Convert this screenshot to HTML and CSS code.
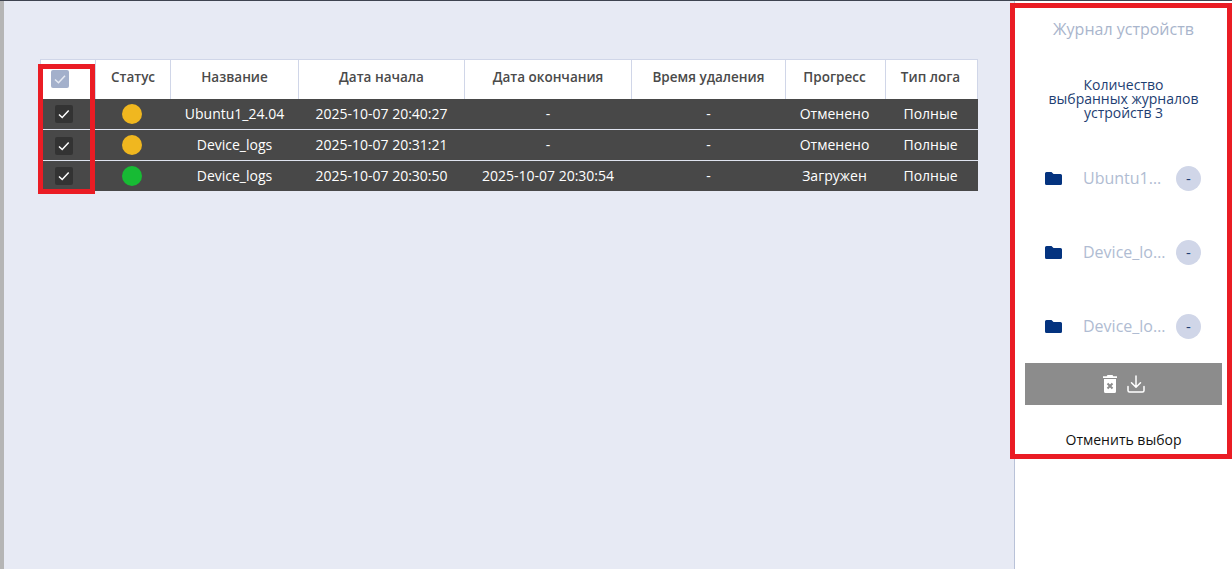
FILE: index.html
```html
<!DOCTYPE html>
<html lang="ru">
<head>
<meta charset="utf-8">
<title>Журнал устройств</title>
<link rel="stylesheet" href="styles.css">
</head>
<body>
<div class="app">
  <div class="strip"></div>
  <main class="main">
    <table class="logs">
      <colgroup>
        <col class="c1"><col class="c2"><col class="c3"><col class="c4"><col class="c5"><col class="c6"><col class="c7"><col class="c8">
      </colgroup>
      <thead>
        <tr>
          <th><span class="check check-head"><svg viewBox="0 0 18 18"><path d="M4 9.500l3.500 3.200 6.500-7"/></svg></span></th>
          <th>Статус</th><th>Название</th><th>Дата начала</th><th>Дата окончания</th><th>Время удаления</th><th>Прогресс</th><th>Тип лога</th>
        </tr>
      </thead>
      <tbody>
        <tr>
          <td><span class="check"><svg viewBox="0 0 18 18"><path d="M4 9.500l3.200 3 6.500-7"/></svg></span></td>
          <td><span class="dot amber"></span></td>
          <td>Ubuntu1_24.04</td><td>2025-10-07 20:40:27</td><td>-</td><td>-</td><td>Отменено</td><td>Полные</td>
        </tr>
        <tr>
          <td><span class="check"><svg viewBox="0 0 18 18"><path d="M4 9.500l3.200 3 6.500-7"/></svg></span></td>
          <td><span class="dot amber"></span></td>
          <td>Device_logs</td><td>2025-10-07 20:31:21</td><td>-</td><td>-</td><td>Отменено</td><td>Полные</td>
        </tr>
        <tr>
          <td><span class="check"><svg viewBox="0 0 18 18"><path d="M4 9.500l3.200 3 6.500-7"/></svg></span></td>
          <td><span class="dot green"></span></td>
          <td>Device_logs</td><td>2025-10-07 20:30:50</td><td>2025-10-07 20:30:54</td><td>-</td><td>Загружен</td><td>Полные</td>
        </tr>
      </tbody>
    </table>
    <div class="mark mark-table"></div>
  </main>
  <aside class="panel">
    <h2 class="panel-title">Журнал устройств</h2>
    <p class="panel-count">Количество<br>выбранных журналов<br>устройств 3</p>
    <ul class="files">
      <li class="file">
        <svg class="folder" viewBox="0 0 17 13"><path d="M1.500 0h5l2 2h7A1.500 1.500 0 0 1 17 3.500v8A1.500 1.500 0 0 1 15.500 13h-14A1.500 1.500 0 0 1 0 11.500v-10A1.500 1.500 0 0 1 1.500 0z"/></svg>
        <span class="file-name">Ubuntu1_24.04</span>
        <span class="minus">-</span>
      </li>
      <li class="file">
        <svg class="folder" viewBox="0 0 17 13"><path d="M1.500 0h5l2 2h7A1.500 1.500 0 0 1 17 3.500v8A1.500 1.500 0 0 1 15.500 13h-14A1.500 1.500 0 0 1 0 11.500v-10A1.500 1.500 0 0 1 1.500 0z"/></svg>
        <span class="file-name">Device_logs</span>
        <span class="minus">-</span>
      </li>
      <li class="file">
        <svg class="folder" viewBox="0 0 17 13"><path d="M1.500 0h5l2 2h7A1.500 1.500 0 0 1 17 3.500v8A1.500 1.500 0 0 1 15.500 13h-14A1.500 1.500 0 0 1 0 11.500v-10A1.500 1.500 0 0 1 1.500 0z"/></svg>
        <span class="file-name">Device_logs</span>
        <span class="minus">-</span>
      </li>
    </ul>
    <div class="actions">
      <svg class="icon-trash" viewBox="0 0 14 18"><path class="solid" d="M4.500 0h5l.8 1.200H14V3H0V1.200h3.700zM1 4h12v12.500a1.500 1.500 0 0 1-1.500 1.500h-9A1.500 1.500 0 0 1 1 16.500z"/><path class="trash-x" d="M4.500 8.500l5 5M9.500 8.500l-5 5"/></svg>
      <svg class="icon-down" viewBox="0 0 18 18"><path d="M9 1v11M4.500 7.800 9 12.300l4.500-4.500M1 11.500v4a1.500 1.500 0 0 0 1.500 1.500h13a1.500 1.500 0 0 0 1.500-1.500v-4"/></svg>
    </div>
    <div class="cancel">Отменить выбор</div>
  </aside>
  <div class="mark mark-panel"></div>
</div>
</body>
</html>
```
FILE: styles.css
```css
* { box-sizing: border-box; }
html, body { margin: 0; height: 100%; overflow: hidden; }
body { font-family: "Open Sans", sans-serif; background: #e7eaf4; }

.app {
  position: relative;
  display: flex;
  height: 569px;
  border-top: 1px solid #3f4450;
}
.strip { width: 4px; background: #b5b5b5; flex: none; }
.main { position: relative; width: 1010px; flex: none; padding: 58px 0 0 36px; }

.logs {
  table-layout: fixed;
  border-collapse: collapse;
  width: 937px;
  font-size: 14px;
  color: #fff;
  text-align: center;
}
.c1 { width: 55px; } .c2 { width: 75px; } .c3 { width: 128px; } .c4 { width: 166px; }
.c5 { width: 167px; } .c6 { width: 154px; } .c7 { width: 100px; } .c8 { width: 92px; }

.logs th {
  height: 39px;
  padding: 0 0 4px;
  background: #fff;
  color: #4a4a4a;
  font-size: 13.5px;
  font-weight: 600;
  border: 1px solid #d0d6e8;
  border-bottom: 0;
}
.logs td {
  height: 31px;
  padding: 0 0 1px;
  background: #484848;
  border-bottom: 1px solid #e0e4f0;
}
.logs tbody tr:last-child td { height: 30px; border-bottom: 0; }
.logs th:nth-child(n+7), .logs td:nth-child(n+7) { padding-right: 2px; }

.check {
  display: inline-flex;
  vertical-align: middle;
  width: 18px;
  height: 18px;
  border-radius: 2px;
  background: #333;
  margin-right: 8px;
}
.check svg { width: 18px; height: 18px; fill: none; stroke: #fff; stroke-width: 1.500; }
.logs th .check-head { background: #a3b0cb; margin: 4px 17px 0 0; }
.check-head svg { stroke: #e6eaf3; }

.dot {
  display: block;
  width: 20px;
  height: 20px;
  margin: 1px auto 0 26px;
  border-radius: 50%;
}
.amber { background: #f0b71f; }
.green { background: #17bb34; }

.panel {
  width: 218px;
  flex: none;
  background: #fff;
  border-left: 1px solid #b9c2d8;
  padding: 17px 10px 0 10px;
  text-align: center;
}
.panel-title {
  margin: 0;
  font-size: 16px;
  line-height: 22px;
  font-weight: 400;
  color: #a9b5cc;
}
.panel-count {
  margin: 38px 0 0;
  font-size: 14px;
  line-height: 14px;
  color: #1d3e72;
}
.files { list-style: none; margin: 21px 0 0; padding: 0; }
.file {
  display: flex;
  align-items: center;
  height: 74px;
  padding-left: 20px;
}
.folder { width: 17px; height: 13px; fill: #04337f; flex: none; }
.file-name {
  width: 84px;
  margin-left: 21px;
  font-size: 16px;
  color: #b0bcd2;
  text-align: left;
  white-space: nowrap;
  overflow: hidden;
  text-overflow: ellipsis;
}
.minus {
  flex: none;
  width: 25px;
  height: 25px;
  margin-left: 9px;
  border-radius: 50%;
  background: #d0d6e8;
  color: #1d3e72;
  font-size: 15px;
  line-height: 24px;
}
.actions {
  display: flex;
  justify-content: center;
  align-items: center;
  gap: 10px;
  height: 42px;
  background: #8c8c8c;
}
.icon-trash { width: 14px; height: 18px; }
.solid { fill: #fff; }
.trash-x { fill: none; stroke: #8c8c8c; stroke-width: 2; }
.icon-down { width: 18px; height: 18px; fill: none; stroke: #fff; stroke-width: 1.500; stroke-linecap: round; stroke-linejoin: round; }
.cancel {
  margin-top: 26px;
  font-size: 14px;
  line-height: 18px;
  color: #111;
}

.mark { position: absolute; border: 5px solid #ea1c24; pointer-events: none; }
.mark-table { left: 34px; top: 63px; width: 57px; height: 130px; }
.mark-panel { left: 1010px; top: 2px; width: 222px; height: 456px; }
```
